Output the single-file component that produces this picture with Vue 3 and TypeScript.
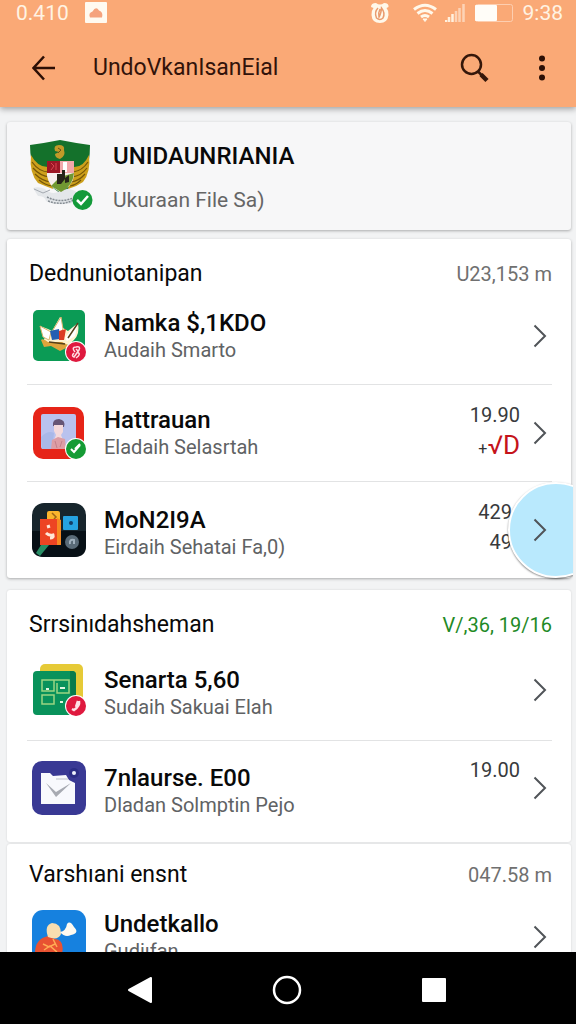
<script setup lang="ts">
interface Row {
  icon: string
  title: string
  sub: string
  badge?: 'red' | 'green' | 'call'
  value?: string
  value2?: string
  flagged?: boolean
  touched?: boolean
  low?: boolean
}
interface Section {
  title: string
  total: string
  tone: 'grey' | 'green'
  rows: Row[]
  size: 'normal' | 'tall' | 'joined'
}

const sections: Section[] = [
  {
    title: 'Dednuniotanipan',
    total: 'U23,153 m',
    tone: 'grey',
    size: 'normal',
    rows: [
      { icon: 'bird', title: 'Namka $,1KDO', sub: 'Audaih Smarto', badge: 'red' },
      { icon: 'photo', title: 'Hattrauan', sub: 'Eladaih Selasrtah', badge: 'green', value: '19.90', value2: '√D', flagged: true },
      { icon: 'blocks', title: 'MoN2I9A', sub: 'Eirdaih Sehatai Fa,0)', value: '429', value2: '49', touched: true, low: true },
    ],
  },
  {
    title: 'Srrsinıdahsheman',
    total: 'V/,36, 19/16',
    tone: 'green',
    size: 'tall',
    rows: [
      { icon: 'sheet', title: 'Senarta 5,60', sub: 'Sudaih Sakuai Elah', badge: 'call', low: true },
      { icon: 'mail', title: '7nlaurse. E00', sub: 'Dladan Solmptin Pejo', value: '19.00', low: true },
    ],
  },
  {
    title: 'Varshıani ensnt',
    total: '047.58 m',
    tone: 'grey',
    size: 'joined',
    rows: [{ icon: 'duck', title: 'Undetkallo', sub: 'Gudiıfan' }],
  },
]
</script>

<template>
  <div class="screen">
    <header class="top">
      <div class="status">
        <span>0.410</span>
        <svg class="cloud" width="22" height="22" viewBox="0 0 22 22">
          <rect width="22" height="21" rx="1" fill="#fffaf0" />
          <path d="M5 15.500Q3 11 7.500 9.500Q11 3.500 14 8.500Q18.500 10 17 15.500Z" fill="#f5a27c" />
        </svg>
        <span class="fill"></span>
        <svg class="alarm" width="20" height="22" viewBox="0 0 20 22">
          <path d="M1 5Q1 1 6 1Q10 4 14 1Q19 1 18.500 5L16.500 6Q19 9 18.500 13Q17.500 21 10 21Q2 21 1.500 13Q1 9 3.500 6Z" fill="#fff8ea" />
          <path d="M8 6Q4 10 6.500 16Q10 19 13 16Q15.500 11 11.500 6Q11 12 9 15Q8 11 10 7" fill="none" stroke="#e99b6e" stroke-width="1.500" />
        </svg>
        <svg class="wifi" width="24" height="20" viewBox="0 0 24 20" fill="none" stroke="#fff8ea" stroke-width="3">
          <path d="M1 6.500Q12 -2 23 6.500" />
          <path d="M4.500 10.500Q12 4.500 19.500 10.500" />
          <path d="M8 14Q12 11 16 14" />
          <path d="M10 16h4l-2 2.500z" fill="#fff8ea" stroke-width="1" />
        </svg>
        <svg class="signal" width="21" height="20" viewBox="0 0 21 20" stroke-width="2.500">
          <path d="M1 19v-2M4 19v-5M7.500 19v-8" stroke="#fff1df" />
          <path d="M11 19V8M14.500 19V5M18.500 19V1" stroke="#fdd3b6" />
        </svg>
        <svg width="38" height="20" viewBox="0 0 38 20">
          <rect x="0.500" y="1.500" width="37" height="17" rx="2" fill="none" stroke="#fdceb0" />
          <rect y="2" width="22" height="16" rx="1" fill="#fffdf8" />
        </svg>
        <span class="clock">9:38</span>
      </div>
      <div class="toolbar">
        <button class="plain" type="button" aria-label="Back">
          <svg width="24" height="26" viewBox="0 0 24 26" fill="none" stroke="#2c0f05" stroke-width="2.500">
            <path d="M12 1.500L1.500 13L12 24.500M2 13H23" />
          </svg>
        </button>
        <h1>UndoVkanIsanEial</h1>
        <button class="plain search" type="button" aria-label="Search">
          <svg width="30" height="30" viewBox="0 0 30 30" fill="none" stroke="#35170a">
            <circle cx="11.500" cy="11.500" r="9.500" stroke-width="2.500" />
            <path d="M18 18.500L22 22.500" stroke-width="2.500" />
            <path d="M21 21.500L27 27.500" stroke-width="4.500" />
          </svg>
        </button>
        <button class="plain" type="button" aria-label="More options">
          <svg width="8" height="26" viewBox="0 0 8 26" fill="#2c0f05">
            <circle cx="4" cy="3.500" r="3" /><circle cx="4" cy="13" r="3" /><circle cx="4" cy="22.500" r="3" />
          </svg>
        </button>
      </div>
    </header>

    <main>
      <section class="card profile">
        <svg width="66" height="74" viewBox="0 0 66 74">
          <path d="M2 6Q17 4 32 1Q47 4 62 6Q62 24 57 36L33 55L8 36Q2 22 2 6Z" fill="#14712b" />
          <path d="M3 16Q10 29 21 28L25 50Q17 47 10 44Q1 34 3 16ZM61 16Q55 29 45 28L40 50Q48 48 55 43Q63 33 61 16Z" fill="#cda01c" />
          <path d="M4 23Q11 33 21 33M5 29Q12 37 22 38M7 35Q14 42 23 43M11 41Q17 46 24 47M60 23Q54 32 45 33M59 29Q53 37 44 38M57 35Q51 42 43 43M53 41Q48 46 42 47" fill="none" stroke="#765609" stroke-width="1.200" />
          <path d="M27 12Q25 6 31 6Q37 6 36 11Q38 17 32 20Q27 19 27 15L31 13Z" fill="#c19a28" />
          <path d="M30 9L33 11L30 14" fill="none" stroke="#64511a" />
          <path d="M5 49Q11 47 17 50Q24 57 32 52Q41 47 50 54L48 63Q31 68 18 62Q17 57 10 57Z" fill="#e4e7ea" />
          <path d="M19 58Q32 65 48 58M20 62Q33 67 46 61" fill="none" stroke="#858c93" stroke-width="1.500" stroke-dasharray="2 1" />
          <path d="M6 50L15 54L22 51" fill="none" stroke="#a4a9b0" />
          <path d="M19 22H46V37Q44 48 32 53Q21 48 19 37Z" fill="#f6eeee" />
          <path d="M19 22H32V34H19Z" fill="#9d1726" /><path d="M32 22H46V34H32Z" fill="#f2a8aa" />
          <path d="M35 23H39V33H35Z" fill="#fff" /><path d="M32 38L46 34Q45 47 33 53L23 47Z" fill="#719832" />
          <path d="M29 35H34V31H37V39L41 36V43L37 44V40L33 45H29Z" fill="#26241a" />
          <path d="M23 24L26 27L23 31M28 24V31" fill="none" stroke="#db4651" />
          <circle cx="54.500" cy="61" r="10" fill="#149a3a" />
          <path d="M49 61L53 65L60 57" fill="none" stroke="#fff" stroke-width="2.500" />
        </svg>
        <div class="owner">
          <h2>UNIDAUNRIANIA</h2>
          <p>Ukuraan File Sa)</p>
        </div>
      </section>

      <section v-for="section in sections" :key="section.title" class="card" :class="section.size">
        <div class="head">
          <h2>{{ section.title }}</h2>
          <span :class="section.tone">{{ section.total }}</span>
        </div>
        <ul>
          <li v-for="row in section.rows" :key="row.title">
            <svg class="icon" width="54" height="54" viewBox="0 0 54 54">
              <g v-if="row.icon === 'bird'">
                <rect x="1" y="1" width="52" height="51" rx="5" fill="#0b9b55" />
                <path d="M8 17L16 20L20 22L28 8L31 19L36 22L46 14Q48 25 42 31Q33 40 22 37L11 33L13 28Z" fill="#fff3ce" />
                <path d="M8 17L19 23L17 31L11 28ZM21 21L29 8L31 20L27 25Z" fill="#fff" stroke="#d9b36b" />
                <path d="M18 22L27 20L28 30L20 31Z" fill="#235eb2" /><path d="M27 22L34 20L32 31H27Z" fill="#db3c24" />
                <path d="M33 29Q39 20 46 14L43 27L35 32Z" fill="#fff" />
                <path d="M9 31Q11 29 16 33L30 33L38 37L28 42L19 37L12 38Z" fill="#dda43c" />
                <path d="M17 33L33 35M36 29L46 14" fill="none" stroke="#544019" stroke-width="1.500" />
              </g>
              <g v-else-if="row.icon === 'photo'">
                <rect x="1" y="1" width="51" height="52" rx="10" fill="#e62418" />
                <rect x="9" y="8" width="35" height="35" rx="2" fill="#b9c2ee" />
                <path d="M9 31Q16 24 22 27L20 43H10Z" fill="#a9b8e8" />
                <path d="M21 20Q20 13 27 13Q34 14 32 21Z" fill="#665575" />
                <path d="M22 19H31V26L29 29L31 34H22L24 29L22 25Z" fill="#f4d9db" />
                <path d="M20 34L26 31L33 33L34 43H19Z" fill="#dd9da5" /><path d="M23 35L25 42M30 35L28 41" stroke="#c4808a" />
              </g>
              <g v-else-if="row.icon === 'blocks'">
                <rect width="54" height="54" rx="12" fill="#17252c" />
                <path d="M0 28H54V43Q54 54 42 54H12Q0 54 0 43Z" fill="#071016" />
                <path d="M4 50L9 42H17L8 53Z" fill="#278d65" />
                <rect x="15" y="8" width="13" height="20" rx="2" fill="#fab42c" />
                <path d="M20 10L24 14L22 16" fill="none" stroke="#9c6417" stroke-width="1.500" />
                <path d="M8 16H25V42H8Z" fill="#ed4423" /><path d="M25 15L29 17V42H25Z" fill="#f78821" />
                <rect x="31" y="13" width="15" height="14" rx="1" fill="#26a3e1" />
                <circle cx="39" cy="20" r="2" fill="#143d65" />
                <path d="M15 24L18 23M14 30Q17 33 21 32Q22 35 18 35" fill="none" stroke="#ffe7d8" stroke-width="3" />
                <circle cx="40" cy="39" r="7" fill="#596b78" /><path d="M38 41Q37 36 42 37V41" fill="none" stroke="#9fb0bd" stroke-width="2" />
              </g>
              <g v-else-if="row.icon === 'sheet'">
                <rect x="8" y="1" width="43" height="43" rx="5" fill="#e6ca37" />
                <rect x="1" y="8" width="43" height="44" rx="4" fill="#09925b" />
                <path d="M38 8H40Q44 8 44 12V52H39Z" fill="#087a4c" />
                <path d="M10 17H22V28H10ZM22 17H37V30H25V20M10 32H22V41H10Z" fill="none" stroke="#9bd582" stroke-width="1.500" />
                <path d="M14 26H17M28 25H33M28 39H31" stroke="#e0f5e0" stroke-width="2" />
              </g>
              <g v-else-if="row.icon === 'mail'">
                <rect width="54" height="54" rx="10" fill="#393994" />
                <path d="M9 12H18L21 15L34 14L37 19L43 22V43H9Z" fill="#f8f9fd" />
                <path d="M14 22L24 31L39 22L24 36Z" fill="#a7aab2" /><path d="M24 18L36 18" fill="none" stroke="#d9dce2" stroke-width="2" />
                <circle cx="42" cy="12" r="5" fill="#2b2d85" /><circle cx="42" cy="12" r="2" fill="#eef1fc" />
              </g>
              <g v-else>
                <rect width="54" height="60" rx="11" fill="#1681df" />
                <path d="M3 43Q3 29 16 26L23 29Q33 30 30 44L31 54H3Z" fill="#e85232" />
                <path d="M16 27Q12 15 20 13Q29 13 29 24Q26 31 16 27Z" fill="#f9deb0" />
                <path d="M28 22Q34 21 35 14Q38 10 42 17Q48 23 39 25Q33 28 28 22Z" fill="#fffaf0" />
                <path d="M11 34L17 37L23 34M12 40L18 36L25 42M21 29L25 37" fill="none" stroke="#ffab54" stroke-width="1.500" />
              </g>
              <g v-if="row.badge">
                <circle cx="44" cy="43" r="11" fill="#fff" />
                <circle cx="44" cy="43" r="10" :fill="row.badge === 'green' ? '#159b35' : '#df193e'" />
                <path v-if="row.badge === 'green'" d="M39 43L42 46L48 39M43 43L48 38" fill="none" stroke="#fff" stroke-width="2" />
                <path v-else-if="row.badge === 'red'" d="M43 43Q39 38 44 38Q49 37 47 41L42 48Q39 47 42 44M45 43Q50 45 44 49M44 40L46 42" fill="none" stroke="#ffdce1" stroke-width="1.500" />
                <path v-else d="M47 38Q48 43 42 47L40 46M46 38L44 44" fill="none" stroke="#ffe0e6" stroke-width="2.500" />
              </g>
            </svg>
            <div class="label" :class="{ low: row.low }">
              <h3>{{ row.title }}</h3>
              <p>{{ row.sub }}</p>
            </div>
            <div v-if="row.value" class="values" :class="{ covered: row.touched }">
              <span>{{ row.value }}</span>
              <span v-if="row.flagged" class="flag"><small>+</small>{{ row.value2 }}</span>
              <span v-else>{{ row.value2 }}</span>
            </div>
            <span v-if="row.touched" class="touch-area"><span class="touch"></span></span>
            <button class="plain chevron" type="button" :aria-label="'Open ' + row.title">
              <svg width="14" height="24" viewBox="0 0 14 24" fill="none" stroke="#505458" stroke-width="2">
                <path d="M1.500 1.500L12 12L1.500 22.500" />
              </svg>
            </button>
          </li>
        </ul>
      </section>
    </main>

    <nav>
      <button class="plain" type="button" aria-label="Back">
        <svg width="26" height="28" viewBox="0 0 26 28"><path d="M2 14L24 2V26Z" fill="#fff" stroke="#fff" stroke-width="2" stroke-linejoin="round" /></svg>
      </button>
      <button class="plain" type="button" aria-label="Home">
        <svg width="30" height="30" viewBox="0 0 30 30"><circle cx="15" cy="15" r="13" fill="none" stroke="#fff" stroke-width="2.500" /></svg>
      </button>
      <button class="plain" type="button" aria-label="Recent apps">
        <svg width="24" height="24" viewBox="0 0 24 24"><rect width="24" height="24" rx="1" fill="#fff" /></svg>
      </button>
    </nav>
  </div>
</template>

<style>
body { margin: 0; background: #f2f3f4; }
</style>

<style scoped>
.screen {
  height: 100vh;
  display: flex;
  flex-direction: column;
  overflow: hidden;
  background: #f2f3f4;
  color: #090909;
  font-family: Roboto, "Liberation Sans", sans-serif;
}
h1, h2, h3, p, ul { margin: 0; padding: 0; font-weight: 400; }
svg { display: block; flex: none; }
.plain { padding: 0; border: 0; background: none; display: grid; place-items: center; }
.top {
  position: relative;
  z-index: 1;
  flex: none;
  background: #faa976;
  box-shadow: 0 2px 6px rgba(0, 0, 0, 0.35);
}
.status {
  height: 28px;
  box-sizing: border-box;
  padding: 0 13px 2px 16px;
  display: flex;
  align-items: center;
  color: #fff3e3;
  font-size: 21px;
  line-height: 26px;
}
.cloud { margin-left: 16px; }
.fill { flex: 1; }
.alarm { margin-right: 23px; }
.wifi { margin-right: 8px; }
.signal { margin-right: 9px; }
.clock { margin-left: 10px; }
.toolbar {
  height: 79px;
  padding: 0 30px 0 32px;
  display: flex;
  align-items: center;
  color: #32130a;
}
.toolbar h1 { flex: 1; margin-left: 37px; font-size: 23px; line-height: 32px; }
.search { margin-right: 48px; }
main { flex: 1; min-height: 0; overflow: hidden; padding: 15px 5px 0 7px; }
.card {
  background: #fff;
  border-radius: 3px;
  box-shadow: 0 1px 3px rgba(0, 0, 0, 0.3);
  margin-bottom: 12px;
}
.profile {
  height: 108px;
  margin-bottom: 9px;
  padding-left: 21px;
  display: flex;
  align-items: center;
  gap: 19px;
  background: #f7f7f8;
}
.owner { padding-top: 4px; }
.owner h2 { font-size: 24px; line-height: 44px; font-weight: 500; }
.owner p { font-size: 21px; line-height: 44px; color: #666; }
.head {
  padding: 21px 19px 0 22px;
  display: flex;
  justify-content: space-between;
  line-height: 28px;
}
.head h2 { font-size: 23px; }
.head span { font-size: 20px; }
.head .grey { color: #707070; }
.head .green { color: #1f8a26; }
ul { list-style: none; margin: 0 19px 0 20px; }
li {
  position: relative;
  height: 96px;
  padding: 0 5px;
  display: flex;
  align-items: center;
}
li + li { border-top: 1px solid #e2e3e4; }
.tall { margin-bottom: 2px; box-shadow: 0 0 2px rgba(0, 0, 0, 0.15); }
.tall li { height: 101px; }
.tall li + li { height: 93px; padding-bottom: 8px; }
.joined { box-shadow: 0 0 2px rgba(0, 0, 0, 0.15); }
.joined .head { padding-top: 17px; }
.label { flex: 1; margin-left: 18px; white-space: nowrap; }
.low { padding-top: 6px; }
.label h3 { font-size: 24px; line-height: 28px; font-weight: 500; }
.label p { font-size: 20px; line-height: 26px; color: #606264; }
.values {
  box-sizing: border-box;
  width: 52px;
  height: 60px;
  margin: 0 13px 6px 0;
  font-size: 20px;
  line-height: 30px;
  color: #383a3c;
  text-align: right;
}
.covered { padding-right: 8px; }
.values span { display: block; }
.values .flag { color: #c5131a; font-size: 26px; }
.flag small { color: #333; font-size: 16px; }
.touch-area {
  position: absolute;
  top: -1px;
  right: -21px;
  width: 68px;
  height: 100px;
  overflow: hidden;
}
.touch {
  position: absolute;
  top: 1px;
  left: 3px;
  width: 92px;
  height: 92px;
  border: 2px solid #fff;
  border-radius: 50%;
  background: #b9e9fd;
  box-shadow: 0 1px 2px rgba(0, 0, 0, 0.5);
}
.chevron { position: relative; }
nav {
  flex: none;
  height: 72px;
  box-sizing: border-box;
  padding: 4px 69px 0 66px;
  display: grid;
  grid-template-columns: repeat(3, 1fr);
  align-items: center;
  background: #000;
}
</style>
